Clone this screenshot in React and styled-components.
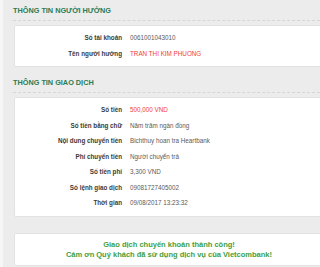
import styled, { createGlobalStyle } from 'styled-components';

const GlobalStyle = createGlobalStyle`
    html, body {
        margin: 0;
        padding: 0;
        background: #f6f6f6;
        font-family: "Liberation Sans", Arial, sans-serif;
        overflow: hidden;
    }
`;

const Page = styled.div`
    margin-left: 3px;
    min-height: 267px;
    background: #ececec;
    padding-left: 10px;
    overflow: hidden;
`;

const Section = styled.div`
    margin-bottom: 5px;
`;

const Heading = styled.h2`
    margin: 0;
    height: 20px;
    line-height: 21px;
    font-size: 7.3px;
    font-weight: bold;
    color: #2b7b55;
    text-transform: uppercase;
    border-bottom: 1px dashed #d6d6d6;
`;

const Card = styled.div`
    margin: 4px -4px 0 1px;
    background: #fff;
    border: 1px solid #e2e2e2;
    border-radius: 2px;
    padding: 4px 0 5px;
`;

const Row = styled.div`
    display: grid;
    grid-template-columns: 107px 1fr;
    column-gap: 8px;
    height: 15.5px;
    align-items: center;
    font-size: 6.3px;
`;

const Label = styled.span`
    text-align: right;
    font-weight: bold;
    color: #3a3a3a;
`;

const Value = styled.span`
    color: ${p => (p.$red ? '#f23b3b' : '#5a5a5a')};
    white-space: nowrap;
`;

const Notice = styled(Card)`
    margin-top: 16px;
    text-align: center;
    color: #3e9e3e;
    font-weight: bold;
    font-size: 7.5px;
    line-height: 10px;
    padding: 6px 0 5px;
`;

const beneficiary = [
    ['Số tài khoản', '0061001043010'],
    ['Tên người hưởng', 'TRAN THI KIM PHUONG', true],
];

const transaction = [
    ['Số tiền', '500,000 VND', true],
    ['Số tiền bằng chữ', 'Năm trăm ngàn đồng'],
    ['Nội dung chuyển tiền', 'Bichthuy hoan tra Heartbank'],
    ['Phí chuyển tiền', 'Người chuyển trả'],
    ['Số tiền phí', '3,300 VND'],
    ['Số lệnh giao dịch', '09081727405002'],
    ['Thời gian', '09/08/2017 13:23:32'],
];

const Rows = ({ items }) =>
    items.map(([label, value, red]) => (
        <Row key={label}>
            <Label>{label}</Label>
            <Value $red={red}>{value}</Value>
        </Row>
    ));

const App = () => {
    return (
        <>
            <GlobalStyle />
            <Page>
                <Section>
                    <Heading>Thông tin người hưởng</Heading>
                    <Card>
                        <Rows items={beneficiary} />
                    </Card>
                </Section>
                <Section>
                    <Heading>Thông tin giao dịch</Heading>
                    <Card>
                        <Rows items={transaction} />
                    </Card>
                </Section>
                <Notice>
                    <div>Giao dịch chuyển khoản thành công!</div>
                    <div>Cảm ơn Quý khách đã sử dụng dịch vụ của Vietcombank!</div>
                </Notice>
            </Page>
        </>
    );
};

export default App;
